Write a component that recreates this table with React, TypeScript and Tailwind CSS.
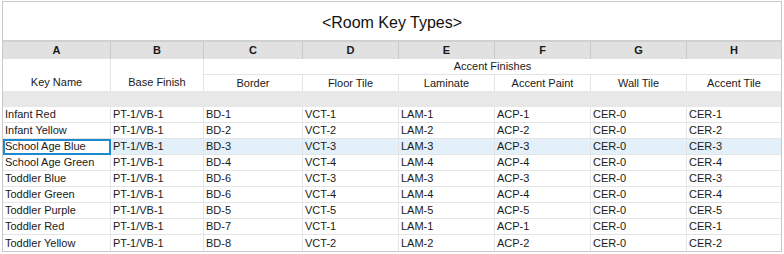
const rows = [
  ["Infant Red", "PT-1/VB-1", "BD-1", "VCT-1", "LAM-1", "ACP-1", "CER-0", "CER-1"],
  ["Infant Yellow", "PT-1/VB-1", "BD-2", "VCT-2", "LAM-2", "ACP-2", "CER-0", "CER-2"],
  ["School Age Blue", "PT-1/VB-1", "BD-3", "VCT-3", "LAM-3", "ACP-3", "CER-0", "CER-3"],
  ["School Age Green", "PT-1/VB-1", "BD-4", "VCT-4", "LAM-4", "ACP-4", "CER-0", "CER-4"],
  ["Toddler Blue", "PT-1/VB-1", "BD-6", "VCT-3", "LAM-3", "ACP-3", "CER-0", "CER-3"],
  ["Toddler Green", "PT-1/VB-1", "BD-6", "VCT-4", "LAM-4", "ACP-4", "CER-0", "CER-4"],
  ["Toddler Purple", "PT-1/VB-1", "BD-5", "VCT-5", "LAM-5", "ACP-5", "CER-0", "CER-5"],
  ["Toddler Red", "PT-1/VB-1", "BD-7", "VCT-1", "LAM-1", "ACP-1", "CER-0", "CER-1"],
  ["Toddler Yellow", "PT-1/VB-1", "BD-8", "VCT-2", "LAM-2", "ACP-2", "CER-0", "CER-2"],
];

const letters = ["A", "B", "C", "D", "E", "F", "G", "H"];
const accent = ["Border", "Floor Tile", "Laminate", "Accent Paint", "Wall Tile", "Accent Tile"];
const cols = "grid grid-cols-[108px_93px_99px_96px_96px_96px_96px_94px]";
const selected = 2;

export default function App() {
  return (
    <div className="w-[784px] h-[254px] bg-white pl-[2px] pt-[1px] font-['Liberation_Sans',Arial,sans-serif] text-[11px] text-[#1a1a1a]">
      <div className="w-[780px] border border-[#c8c8c8]">
        {/* schedule title */}
        <div className="h-[40px] flex items-center justify-center pt-[3px] text-[16px] text-[#111] border-b-2 border-[#d0d0d0]">
          &lt;Room Key Types&gt;
        </div>

        {/* column letters */}
        <div className={`${cols} h-[17px] bg-[#e1e1e1]`}>
          {letters.map((l, i) => (
            <div
              key={l}
              className={`flex items-center justify-center font-bold ${i < 7 ? "border-r border-[#c9c9c9]" : ""}`}
            >
              {l}
            </div>
          ))}
        </div>

        {/* grouped headers */}
        <div className={`${cols} grid-rows-[16px_16px]`}>
          <div className="row-span-2 flex items-end justify-center pb-[1px] border-r border-[#e4e4e4]">Key Name</div>
          <div className="row-span-2 flex items-end justify-center pb-[1px] border-r border-[#e4e4e4]">Base Finish</div>
          <div className="col-span-6 flex items-center justify-center border-b border-[#e4e4e4]">Accent Finishes</div>
          {accent.map((h, i) => (
            <div
              key={h}
              className={`flex items-center justify-center ${i < 5 ? "border-r border-[#e4e4e4]" : ""}`}
            >
              {h}
            </div>
          ))}
        </div>

        <div className="h-[16px] bg-[#e8e8e8]" />

        {rows.map((r, ri) => (
          <div
            key={r[0]}
            className={`${cols} h-[16px] ${ri < rows.length - 1 ? "border-b border-[#e4e4e4]" : ""} ${ri === selected ? "bg-[#e3f0f9]" : ""}`}
          >
            {r.map((c, ci) => (
              <div
                key={ci}
                className={`relative flex items-center pl-[2px] leading-none ${ci < 7 ? "border-r border-[#e4e4e4]" : ""} ${ri === selected && ci === 0 ? "bg-white" : ""}`}
              >
                {c}
                {ri === selected && ci === 0 && (
                  <div className="absolute left-0 right-[-1px] top-0 bottom-[-1px] border-2 border-[#1d8ad0]" />
                )}
              </div>
            ))}
          </div>
        ))}
      </div>
    </div>
  );
}
